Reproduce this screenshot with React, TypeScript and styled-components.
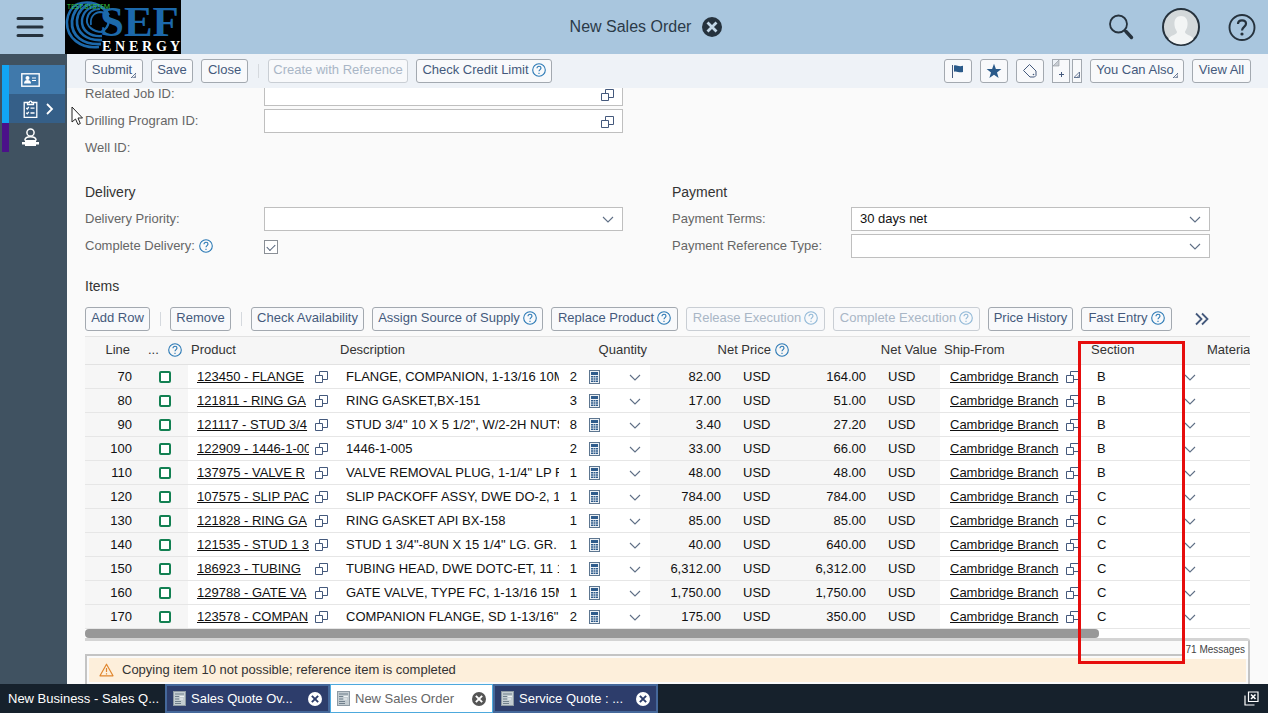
import React from "react";
import styled, { createGlobalStyle, css } from "styled-components";

const INK = "#44597c";
const BLUE = "#2b79b5";

const GlobalStyle = createGlobalStyle`
  * { box-sizing: border-box; }
  html, body, #root { height: 100%; }
  body {
    margin: 0;
    font-family: "Liberation Sans", Arial, sans-serif;
    font-size: 13px;
    line-height: 16px;
    color: #222;
    overflow: hidden;
  }
  button, input, select { font: inherit; color: inherit; margin: 0; }
  button { cursor: pointer; }
  svg { display: block; flex: none; }
`;

const Page = styled.div`
  height: 100vh;
  display: flex;
  flex-direction: column;
  background: #fafafa;
`;

/* ---------- header ---------- */

const Header = styled.header`
  flex: none;
  height: 54px;
  display: grid;
  grid-template-columns: 1fr auto 1fr;
  align-items: center;
  background: #a9c6de;
`;

const HeaderSide = styled.div<{ $end?: boolean }>`
  display: flex;
  align-items: center;
  justify-content: ${(p) => (p.$end ? "flex-end" : "flex-start")};
  gap: ${(p) => (p.$end ? "28px" : "0")};
  padding-right: ${(p) => (p.$end ? "12px" : "0")};
`;

const PlainButton = styled.button`
  display: flex;
  align-items: center;
  justify-content: center;
  padding: 0;
  border: 0;
  background: none;
`;

const MenuButton = styled(PlainButton)`
  width: 65px;
  height: 54px;
  padding-right: 5px;
`;

const PageTitle = styled.h1`
  display: flex;
  align-items: center;
  gap: 11px;
  margin: 0;
  padding-left: 24px;
  font-size: 16px;
  line-height: 20px;
  font-weight: 400;
  color: #2b3a48;
`;

/* ---------- body frame ---------- */

const Middle = styled.div`
  flex: 1;
  min-height: 0;
  display: flex;
`;

const Sidebar = styled.nav`
  flex: none;
  width: 67px;
  padding-top: 11px;
  background: #405261;
`;

const SideItem = styled.a<{ $bar: string; $fill: string }>`
  display: flex;
  align-items: center;
  gap: 6px;
  height: 29px;
  margin: 0 2px;
  padding-left: 12px;
  border-left: 7px solid ${(p) => p.$bar};
  background: ${(p) => p.$fill};
`;

const Main = styled.main`
  flex: 1;
  min-width: 0;
  display: flex;
  flex-direction: column;
`;

const Toolbar = styled.div`
  flex: none;
  height: 34px;
  display: flex;
  align-items: center;
  gap: 8px;
  padding: 0 17px 0 18px;
  background: #eef2f7;
`;

const Spacer = styled.div`
  flex: 1;
`;

const Divider = styled.span`
  width: 1px;
  height: 14px;
  margin: 0 1px 0 2px;
  background: #d5d9de;
`;

const Button = styled.button<{ $width?: number }>`
  flex: none;
  display: flex;
  align-items: center;
  justify-content: center;
  gap: 3px;
  height: 24px;
  width: ${(p) => (p.$width ? `${p.$width}px` : "auto")};
  padding: 0 0 2px;
  border: 1px solid #a3a9b0;
  border-radius: 3px;
  background: #f8f9fb;
  color: ${INK};
  white-space: nowrap;
  &:disabled {
    color: #a9b6c6;
    border-color: #c9ced4;
    cursor: default;
  }
  &:disabled svg { opacity: 0.5; }
`;

const IconButton = styled(Button)`
  padding: 0;
`;

const SplitButton = styled.div`
  display: flex;
  gap: 2px;
`;

const SplitPart = styled(IconButton)`
  border-radius: 0;
`;

const Corner = styled.span`
  width: 5px;
  height: 5px;
  align-self: flex-end;
  margin: 0 0 2px -4px;
`;

const ScrollArea = styled.div`
  flex: 1;
  min-height: 0;
  overflow: hidden;
`;

/* The form is scrolled a few pixels under the toolbar. */
const Content = styled.div`
  margin-top: -6px;
  padding: 0 18px;
`;

/* ---------- form ---------- */

const FormGrid = styled.div<{ $spaced?: boolean }>`
  display: grid;
  grid-template-columns: 1fr 1fr;
  column-gap: 49px;
  padding-right: 40px;
  margin-top: ${(p) => (p.$spaced ? "22px" : "0")};
`;

const Fields = styled.div`
  display: flex;
  flex-direction: column;
  gap: 3px;
`;

const Field = styled.div`
  display: grid;
  grid-template-columns: 179px 1fr;
  align-items: center;
  min-height: 24px;
`;

const Label = styled.label`
  display: flex;
  align-items: center;
  gap: 4px;
  color: #666;
`;

const Heading = styled.h2`
  margin: 0;
  padding-bottom: 2px;
  font-size: 14px;
  line-height: 20px;
  font-weight: 400;
  color: #333;
`;

const Box = styled.div`
  position: relative;
  height: 24px;
`;

const boxed = css`
  width: 100%;
  height: 24px;
  padding: 0 8px;
  border: 1px solid #bfbfbf;
  border-radius: 0;
  background: #fff;
  color: #111;
  outline: none;
`;

const TextInput = styled.input`
  ${boxed}
`;

const Select = styled.select`
  ${boxed}
  appearance: none;
`;

const BoxIcon = styled.span`
  position: absolute;
  right: 9px;
  top: 6px;
  pointer-events: none;
`;

const Check = styled.input`
  appearance: none;
  width: 14px;
  height: 14px;
  margin: 2px 0 0;
  border: 1px solid #8a8f96;
  background: #fff;
  display: grid;
  place-items: center;
  &:checked::after {
    content: "";
    width: 7px;
    height: 4px;
    margin-top: -2px;
    border-left: 1px solid #53627a;
    border-bottom: 1px solid #53627a;
    transform: rotate(-45deg);
  }
`;

/* ---------- items ---------- */

const ItemsHead = styled.div`
  margin-top: 18px;
`;

const ItemsBar = styled.div`
  display: flex;
  align-items: center;
  gap: 8px;
  margin: 9px 0 5px;
`;

const Items = styled.section`
  position: relative;
`;

const TableClip = styled.div`
  overflow: hidden;
`;

const Table = styled.table`
  table-layout: fixed;
  width: 1230px;
  min-width: 100%;
  border-collapse: collapse;
`;

const Th = styled.th<{ $align?: string; $pad?: number }>`
  height: 28px;
  padding: 0 ${(p) => (p.$align === "right" ? p.$pad ?? 3 : 0)}px 2px
    ${(p) => (p.$align === "right" ? 0 : p.$pad ?? 3)}px;
  border-top: 1px solid #e2e2e2;
  border-bottom: 1px solid #e2e2e2;
  background: #f6f6f6;
  color: #333;
  font-weight: 400;
  text-align: ${(p) => p.$align ?? "left"};
  white-space: nowrap;
`;

const Td = styled.td<{ $grey?: boolean; $align?: string; $pad?: number }>`
  height: 24px;
  padding: 0 ${(p) => (p.$align === "right" ? p.$pad ?? 0 : 0)}px 0
    ${(p) => (p.$align === "right" ? 0 : p.$pad ?? 0)}px;
  border-bottom: 1px solid #e6e6e6;
  background: ${(p) => (p.$grey ? "#f6f6f6" : "#fff")};
  color: #111;
  text-align: ${(p) => p.$align ?? "left"};
  white-space: nowrap;
  overflow: hidden;
`;

const Inline = styled.span<{ $gap?: number; $end?: boolean }>`
  display: flex;
  align-items: center;
  justify-content: ${(p) => (p.$end ? "flex-end" : "flex-start")};
  gap: ${(p) => p.$gap ?? 4}px;
`;

const ClipLink = styled.a<{ $width: number }>`
  width: ${(p) => p.$width}px;
  overflow: hidden;
  color: #111;
  text-decoration: underline;
`;

const Amount = styled.span`
  width: 71px;
  text-align: right;
`;

const Status = styled.span`
  display: block;
  width: 12px;
  height: 12px;
  border: 2px solid #128052;
  border-radius: 2px;
  background: #fff;
`;

const ScrollTrack = styled.div`
  height: 9px;
  background: #fff;
`;

const ScrollThumb = styled.div`
  width: 87%;
  height: 9px;
  border-radius: 4px;
  background: #989898;
`;

const Highlight = styled.div`
  position: absolute;
  left: 993px;
  top: 5px;
  width: 107px;
  height: 323px;
  border: 3px solid #e60d0d;
  pointer-events: none;
`;

const Messages = styled.div`
  border-top: 3px solid #d4d4d4;
  border-right: 2px solid #c4c4c4;
  border-radius: 0 4px 0 0;
`;

const MessageTab = styled.div`
  display: flex;
  justify-content: flex-end;
  height: 13px;
  span {
    width: 66px;
    height: 18px;
    padding-right: 3px;
    background: #fff;
    color: #444;
    font-size: 10px;
    line-height: 18px;
    text-align: right;
    white-space: nowrap;
  }
`;

const MessageBox = styled.div`
  height: 60px;
  margin-right: 66px;
  border-top: 2px solid #c4c4c4;
  border-left: 2px solid #c4c4c4;
`;

const Message = styled.div`
  display: flex;
  align-items: center;
  gap: 8px;
  height: 24px;
  margin: 2px -64px 0 2px;
  padding-left: 10px;
  background: #fdefdb;
  color: #333;
`;

/* ---------- task bar ---------- */

const TaskBar = styled.footer`
  position: relative;
  flex: none;
  height: 29px;
  display: flex;
  align-items: center;
  padding-right: 9px;
  background: #16212c;
  color: #fff;
`;

const Task = styled.div<{ $state: "plain" | "idle" | "active" }>`
  display: flex;
  align-items: center;
  gap: 5px;
  width: ${(p) => (p.$state === "active" ? "163px" : "165px")};
  height: 29px;
  padding: 0 6px;
  border: 2px solid transparent;
  white-space: nowrap;
  ${(p) =>
    p.$state === "idle" &&
    css`
      border-color: #45689a;
      background: #2d3d6b;
    `}
  ${(p) =>
    p.$state === "active" &&
    css`
      border: 1px solid #4da9dd;
      background: #fff;
      color: #666;
    `}
`;

const TaskName = styled.span`
  flex: 1;
`;

/* ---------- icons ---------- */

const Help = ({ size = 14 }: { size?: number }) => (
  <svg width={size} height={size} viewBox="0 0 14 14" fill="none" stroke={BLUE} strokeWidth="1.1">
    <circle cx="7" cy="7" r="6.3" />
    <path d="M5 5.3C5 4 5.8 3.3 7 3.3s2 .8 2 1.8c0 1.4-2 1.6-2 3.2" />
    <path d="M7 9.8v1.2" />
  </svg>
);

const Lookup = () => (
  <svg width="13" height="13" viewBox="0 0 13 13" fill="none" stroke={INK} strokeWidth="1">
    <path d="M.5 5.500h7v7h-7zM4.500 5.500v-4h8v8h-5" />
  </svg>
);

const Chevron = () => (
  <svg width="12" height="12" viewBox="0 0 12 12" fill="none" stroke="#5f6f86" strokeWidth="1.1">
    <path d="M1 4l5 5 5-5" />
  </svg>
);

const Calculator = () => (
  <svg width="11" height="14" viewBox="0 0 11 14">
    <rect x=".5" y=".5" width="10" height="13" fill="#eef2f6" stroke="#5d7690" />
    <rect x="2" y="2" width="7" height="3" fill="#2f5c8c" />
    <path d="M2 6h2v1.500H2zM4.500 6h2v1.500h-2zM7 6h2v1.500H7zM2 8.300h2v1.500H2zM4.500 8.300h2v1.500h-2zM7 8.300h2v1.500H7zM2 10.600h2v1.500H2zM4.500 10.600h2v1.500h-2zM7 10.600h2v1.500H7z" fill="#2f5c8c" />
  </svg>
);

const Close = ({ size, fill, mark }: { size: number; fill: string; mark: string }) => (
  <svg width={size} height={size} viewBox="0 0 20 20">
    <circle cx="10" cy="10" r="10" fill={fill} />
    <path d="M5.500 5.500l9 9M14.500 5.500l-9 9" stroke={mark} strokeWidth="2.800" />
  </svg>
);

const DropMark = () => (
  <Corner>
    <svg width="5" height="5" viewBox="0 0 5 5" fill="none" stroke={INK} strokeWidth=".8">
      <path d="M5 0v5H0zM5 2.6L2.6 5" />
    </svg>
  </Corner>
);

const DocIcon = () => (
  <svg width="13" height="15" viewBox="0 0 13 15">
    <rect width="13" height="15" fill="#8e9aa3" />
    <rect x="1" y="1" width="11" height="13" fill="#c3ccd1" />
    <path d="M2 3h9M2 5.5h4M2 8h4M2 10.5h6M2 12.5h6" stroke="#70808c" />
    <path d="M7 5.5h4M7 8h3" stroke="#eef3f4" />
  </svg>
);

const Logo = () => (
  <svg width="116" height="54" viewBox="0 0 116 54" role="img" aria-label="SEF Energy">
    <rect width="116" height="54" fill="#000" />
    <g fill="none" stroke="#1c69ab">
      <path d="M34 47C16 49 1 38 2 21 3 12 7 7 12 4" strokeWidth="2.600" />
      <path d="M36 44C18 45 6 36 7 21 8 13 12 7 18 4" strokeWidth="2.800" />
      <path d="M37 40C22 41 11 33 12 20 13 12 18 6 26 4" strokeWidth="2.600" />
      <path d="M37 36C26 37 16 31 17 20 18 12 24 7 32 6" strokeWidth="2.400" />
      <path d="M37 32C28 32 21 26 22 19c1-6 5-10 13-10" strokeWidth="2" />
      <path d="M26 25c-1-7 2-12 9-13 4 0 6 2 8 5" strokeWidth="1.800" />
      <path d="M12 4c12-4 26-1 32 11M22 3c10 0 18 5 21 13 2 8-1 13-7 16" strokeWidth="2.200" />
    </g>
    <text x="35" y="36" fontFamily="Liberation Serif, serif" fontSize="43" fontWeight="700" fill="#1c69ab">
      SEF
    </text>
    <text y="51" fontFamily="Liberation Serif, serif" fontSize="14" fontWeight="700" fill="#fff" x="37 50 64 77 91 105">
      ENERGY
    </text>
    <text x="2" y="9" fontFamily="Noto Sans, sans-serif" fontSize="7" fill="#39c839">
      TEST SYSTEM
    </text>
  </svg>
);

const Cursor = styled.svg`
  position: absolute;
  left: 71px;
  top: 106px;
`;

/* ---------- data ---------- */

type Row = [string, string, string, string, string, string, string];

const rows: Row[] = [
  ["70", "123450 - FLANGE", "FLANGE, COMPANION, 1-13/16 10M", "2", "82.00", "164.00", "B"],
  ["80", "121811 - RING GA", "RING GASKET,BX-151", "3", "17.00", "51.00", "B"],
  ["90", "121117 - STUD 3/4", "STUD 3/4\" 10 X 5 1/2\", W/2-2H NUTS", "8", "3.40", "27.20", "B"],
  ["100", "122909 - 1446-1-005", "1446-1-005", "2", "33.00", "66.00", "B"],
  ["110", "137975 - VALVE R", "VALVE REMOVAL PLUG, 1-1/4\" LP F", "1", "48.00", "48.00", "B"],
  ["120", "107575 - SLIP PAC", "SLIP PACKOFF ASSY, DWE DO-2, 1", "1", "784.00", "784.00", "C"],
  ["130", "121828 - RING GA", "RING GASKET API BX-158", "1", "85.00", "85.00", "C"],
  ["140", "121535 - STUD 1 3", "STUD 1 3/4\"-8UN X 15 1/4\" LG. GR.", "1", "40.00", "640.00", "C"],
  ["150", "186923 - TUBING", "TUBING HEAD, DWE DOTC-ET, 11 1", "1", "6,312.00", "6,312.00", "C"],
  ["160", "129788 - GATE VA", "GATE VALVE, TYPE FC, 1-13/16 15M", "1", "1,750.00", "1,750.00", "C"],
  ["170", "123578 - COMPAN", "COMPANION FLANGE, SD 1-13/16\"", "2", "175.00", "350.00", "C"],
];

const columns = [57, 46, 149, 222, 91, 145, 145, 148, 115, 112];

const LookupField = ({ id, label }: { id: string; label: string }) => (
  <Field>
    <Label htmlFor={id}>{label}</Label>
    <Box>
      <TextInput id={id} type="text" />
      <BoxIcon><Lookup /></BoxIcon>
    </Box>
  </Field>
);

const SelectField = ({ id, label, value = "" }: { id: string; label: string; value?: string }) => (
  <Field>
    <Label htmlFor={id}>{label}</Label>
    <Box>
      <Select id={id} defaultValue={value}>
        <option value={value}>{value}</option>
      </Select>
      <BoxIcon><Chevron /></BoxIcon>
    </Box>
  </Field>
);

export default function App() {
  return (
    <Page>
      <GlobalStyle />
      <Header>
        <HeaderSide>
          <MenuButton aria-label="Menu">
            <svg width="28" height="22" viewBox="0 0 28 22" stroke="#26323d" strokeWidth="3" strokeLinecap="round">
              <path d="M2 2.5h24M2 11h24M2 19.5h24" />
            </svg>
          </MenuButton>
          <Logo />
        </HeaderSide>
        <PageTitle>
          New Sales Order
          <PlainButton aria-label="Close page">
            <Close size={20} fill="#26323d" mark="#c4d8e8" />
          </PlainButton>
        </PageTitle>
        <HeaderSide $end>
          <PlainButton aria-label="Search">
            <svg width="26" height="26" viewBox="0 0 26 26" fill="none" stroke="#26323d">
              <circle cx="10.500" cy="10" r="8.500" strokeWidth="1.800" />
              <path d="M16.500 16.500l1.500 1.200" strokeWidth="2" />
              <path d="M18 17.500l5.500 6" strokeWidth="3.400" strokeLinecap="round" />
            </svg>
          </PlainButton>
          <PlainButton aria-label="Account">
            <svg width="38" height="38" viewBox="0 0 38 38">
              <circle cx="19" cy="19" r="18" fill="#d3d8da" stroke="#26323d" strokeWidth="2" />
              <path d="M19 8c5 0 7 4 6.500 9-.3 4-2 5-2.500 7 0 3 7 3 8.500 7a17 17 0 0 1-25 0c1.500-4 8.500-4 8.500-7-.5-2-2.200-3-2.500-7C12 12 14 8 19 8z" fill="#f3f5f5" />
            </svg>
          </PlainButton>
          <PlainButton aria-label="Help">
            <svg width="28" height="28" viewBox="0 0 28 28" fill="none" stroke="#26323d">
              <circle cx="14" cy="14.500" r="12.500" strokeWidth="1.900" />
              <path d="M10 11C10 8.500 11.600 7.300 14 7.300s4 1.400 4 3.500c0 3-4 3.200-4 6.700" strokeWidth="2.200" />
              <circle cx="14" cy="21" r="1.600" fill="#26323d" stroke="none" />
            </svg>
          </PlainButton>
        </HeaderSide>
      </Header>

      <Middle>
        <Sidebar>
          <SideItem href="#accounts" aria-label="Accounts" $bar="#12a5f4" $fill="#4079ab">
            <svg width="19" height="14" viewBox="0 0 19 14" fill="none" stroke="#fff">
              <rect x=".8" y=".8" width="17.400" height="12.400" strokeWidth="1.400" />
              <path d="M11 5h4M11 7.500h4" />
              <circle cx="6.500" cy="5" r="2" fill="#fff" stroke="none" />
              <path d="M3 10.500C3 8 4.500 7 6.500 7S10 8 10 10.500z" fill="#fff" stroke="none" />
            </svg>
          </SideItem>
          <SideItem href="#sales" aria-label="Sales" $bar="#12a5f4" $fill="#355f88">
            <svg width="19" height="18" viewBox="0 0 19 18" fill="none" stroke="#fff" strokeWidth="1.300">
              <path d="M6.500 2.500H3.200v14.800h12.600V2.500h-3.300" />
              <path d="M6.500 4.500v-2h1.700a1.300 1.300 0 0 1 2.600 0h1.700v2z" />
              <path d="M5.300 8l1 1 1.500-2M9.500 8.200h4M5.300 12.800l1 1 1.500-2M9.500 13h4" />
            </svg>
            <svg width="8" height="12" viewBox="0 0 8 12" fill="none" stroke="#fff" strokeWidth="1.800">
              <path d="M1 1l5 5-5 5" />
            </svg>
          </SideItem>
          <SideItem href="#service" aria-label="Service" $bar="#4b1189" $fill="transparent">
            <svg width="19" height="19" viewBox="0 0 19 19" fill="none" stroke="#fff" strokeWidth="1.500">
              <circle cx="9.500" cy="4.500" r="3.600" />
              <path d="M3.800 12.500C4 9.800 6 8.800 9.500 8.800s5.500 1 5.700 3.700" />
              <path d="M4 12h11v2h3v2.500h-3V18H4v-1.500H1V14h3z" fill="#fff" stroke="none" />
            </svg>
          </SideItem>
        </Sidebar>

        <Main>
          <Toolbar>
            <Button $width={58}>Submit<DropMark /></Button>
            <Button $width={42}>Save</Button>
            <Button $width={47}>Close</Button>
            <Divider />
            <Button $width={140} disabled>Create with Reference</Button>
            <Button $width={136}>Check Credit Limit <Help /></Button>
            <Spacer />
            <IconButton $width={28} aria-label="Flag">
              <svg width="14" height="16" viewBox="0 0 14 16">
                <path d="M1.500 2v13" stroke={INK} strokeWidth="1" />
                <path d="M3 2.500c3-1 4 1.500 9 .3V9c-4 1.200-6-1.300-9-.3z" fill="#2a5a8a" />
              </svg>
            </IconButton>
            <IconButton $width={28} aria-label="Favorite">
              <svg width="16" height="16" viewBox="0 0 16 16">
                <path d="M8 .8l1.900 5.300h5.500l-4.400 3.400 1.600 5.400L8 11.700l-4.600 3.200L5 9.500.6 6.100h5.500z" fill="#2a5a8a" />
              </svg>
            </IconButton>
            <IconButton $width={28} aria-label="Tag">
              <svg width="16" height="16" viewBox="0 0 16 16" fill="none" stroke={INK} strokeWidth="1">
                <path d="M1.500 7.500L7.500 1.500 14 8v4.500L12.500 14H8z" />
                <circle cx="11.500" cy="11.500" r=".8" fill={INK} stroke="none" />
              </svg>
            </IconButton>
            <SplitButton>
              <SplitPart $width={18} aria-label="New">
                <svg width="16" height="22" viewBox="0 0 16 22">
                  <path d="M0 0h6L0 6z" fill="#eef2f7" />
                  <path d="M6 0v6H0z" fill="#c9ced4" stroke="#8d949c" strokeWidth=".6" />
                  <path d="M6 14.500h5M8.500 12v5" stroke={INK} />
                </svg>
              </SplitPart>
              <SplitPart $width={10} aria-label="More new options">
                <svg width="6" height="14" viewBox="0 0 6 14" fill="none" stroke={INK} strokeWidth=".8">
                  <path d="M5.500 8v5.500H0zM5.500 11L3 13.500" />
                </svg>
              </SplitPart>
            </SplitButton>
            <Button $width={94}>You Can Also<DropMark /></Button>
            <Button $width={59}>View All</Button>
          </Toolbar>

          <ScrollArea>
            <Content>
              <FormGrid>
                <Fields>
                  <LookupField id="job" label="Related Job ID:" />
                  <LookupField id="program" label="Drilling Program ID:" />
                  <Field><Label as="span">Well ID:</Label></Field>
                </Fields>
              </FormGrid>

              <FormGrid $spaced>
                <Fields>
                  <Heading>Delivery</Heading>
                  <SelectField id="priority" label="Delivery Priority:" />
                  <Field>
                    <Label htmlFor="complete">Complete Delivery: <Help /></Label>
                    <Check id="complete" type="checkbox" defaultChecked />
                  </Field>
                </Fields>
                <Fields>
                  <Heading>Payment</Heading>
                  <SelectField id="terms" label="Payment Terms:" value="30 days net" />
                  <SelectField id="reftype" label="Payment Reference Type:" />
                </Fields>
              </FormGrid>

              <ItemsHead><Heading>Items</Heading></ItemsHead>
              <ItemsBar>
                <Button $width={65}>Add Row</Button>
                <Divider />
                <Button $width={61}>Remove</Button>
                <Divider />
                <Button $width={113}>Check Availability</Button>
                <Button $width={171}>Assign Source of Supply <Help /></Button>
                <Button $width={127}>Replace Product <Help /></Button>
                <Button $width={139} disabled>Release Execution <Help /></Button>
                <Button $width={147} disabled>Complete Execution <Help /></Button>
                <Button $width={85}>Price History</Button>
                <Button $width={91}>Fast Entry <Help /></Button>
                <PlainButton aria-label="More actions">
                  <svg width="44" height="14" viewBox="0 0 44 14" fill="none" stroke={INK} strokeWidth="1.800">
                    <path d="M16 1.500l5.500 5.500-5.500 5.500M22 1.500l5.500 5.500-5.500 5.500" />
                  </svg>
                </PlainButton>
              </ItemsBar>

              <Items>
                <TableClip>
                  <Table>
                    <colgroup>
                      {columns.map((w, i) => <col key={i} width={w} />)}
                    </colgroup>
                    <thead>
                      <tr>
                        <Th $align="right" $pad={12}>Line</Th>
                        <Th $pad={6}><Inline $gap={9}>... <Help /></Inline></Th>
                        <Th>Product</Th>
                        <Th>Description</Th>
                        <Th $align="right">Quantity</Th>
                        <Th $align="right" $pad={6}><Inline $end>Net Price <Help /></Inline></Th>
                        <Th $align="right">Net Value</Th>
                        <Th $pad={4}>Ship-From</Th>
                        <Th>Section</Th>
                        <Th $pad={4}>Material</Th>
                      </tr>
                    </thead>
                    <tbody>
                      {rows.map(([line, product, text, qty, price, value, section]) => (
                        <tr key={line}>
                          <Td $grey $align="right" $pad={10}>{line}</Td>
                          <Td $grey $pad={17}><Status /></Td>
                          <Td $pad={9}>
                            <Inline $gap={6}>
                              <ClipLink href={`#product-${line}`} $width={112}>{product}</ClipLink>
                              <Lookup />
                            </Inline>
                          </Td>
                          <Td $pad={9}>{text}</Td>
                          <Td $align="right" $pad={9}>
                            <Inline $end $gap={29}>
                              <Inline $gap={12}>{qty}<Calculator /></Inline>
                              <Chevron />
                            </Inline>
                          </Td>
                          <Td $grey><Inline $gap={22}><Amount>{price}</Amount>USD</Inline></Td>
                          <Td $grey><Inline $gap={22}><Amount>{value}</Amount>USD</Inline></Td>
                          <Td $pad={10}>
                            <Inline $gap={6}>
                              <ClipLink href={`#branch-${line}`} $width={110}>Cambridge Branch</ClipLink>
                              <Lookup />
                            </Inline>
                          </Td>
                          <Td $pad={9}>
                            <Inline $gap={78}>{section}<Chevron /></Inline>
                          </Td>
                          <Td />
                        </tr>
                      ))}
                    </tbody>
                  </Table>
                </TableClip>
                <ScrollTrack><ScrollThumb /></ScrollTrack>
                <Highlight />
              </Items>

              <Messages>
                <MessageTab><span>71 Messages</span></MessageTab>
                <MessageBox>
                  <Message>
                    <svg width="15" height="14" viewBox="0 0 15 14" fill="none" stroke="#e0862e" strokeWidth="1.200">
                      <path d="M7.500 1.200L14 12.800H1z" strokeLinejoin="round" />
                      <path d="M7.500 5v4M7.500 10.200v1.200" />
                    </svg>
                    Copying item 10 not possible; reference item is completed
                  </Message>
                </MessageBox>
              </Messages>
            </Content>
          </ScrollArea>
        </Main>
      </Middle>

      <TaskBar>
        <Task $state="plain"><TaskName>New Business - Sales Q...</TaskName></Task>
        <Task $state="idle">
          <DocIcon /><TaskName>Sales Quote Ov...</TaskName>
          <PlainButton aria-label="Close Sales Quote"><Close size={14} fill="#fff" mark="#2d3d6b" /></PlainButton>
        </Task>
        <Task $state="active">
          <DocIcon /><TaskName>New Sales Order</TaskName>
          <PlainButton aria-label="Close New Sales Order"><Close size={14} fill="#555" mark="#fff" /></PlainButton>
        </Task>
        <Task $state="idle">
          <DocIcon /><TaskName>Service Quote : ...</TaskName>
          <PlainButton aria-label="Close Service Quote"><Close size={14} fill="#fff" mark="#2d3d6b" /></PlainButton>
        </Task>
        <Spacer />
        <PlainButton aria-label="Close all">
          <svg width="15" height="15" viewBox="0 0 15 15" fill="none" stroke="#fff" strokeWidth="1.200">
            <path d="M4.500 1h9.500v9.500H4.500zM1 4.500V14h9.500" />
            <path d="M7 3.500l4.500 4.500M11.500 3.500L7 8" strokeWidth="1.600" />
          </svg>
        </PlainButton>
      </TaskBar>

      <Cursor width="12" height="20" viewBox="0 0 12 20">
        <path d="M1 1v15l3.500-3 2.500 5.500 2.300-1L7 12h4.500z" fill="#fff" stroke="#222" />
      </Cursor>
    </Page>
  );
}
